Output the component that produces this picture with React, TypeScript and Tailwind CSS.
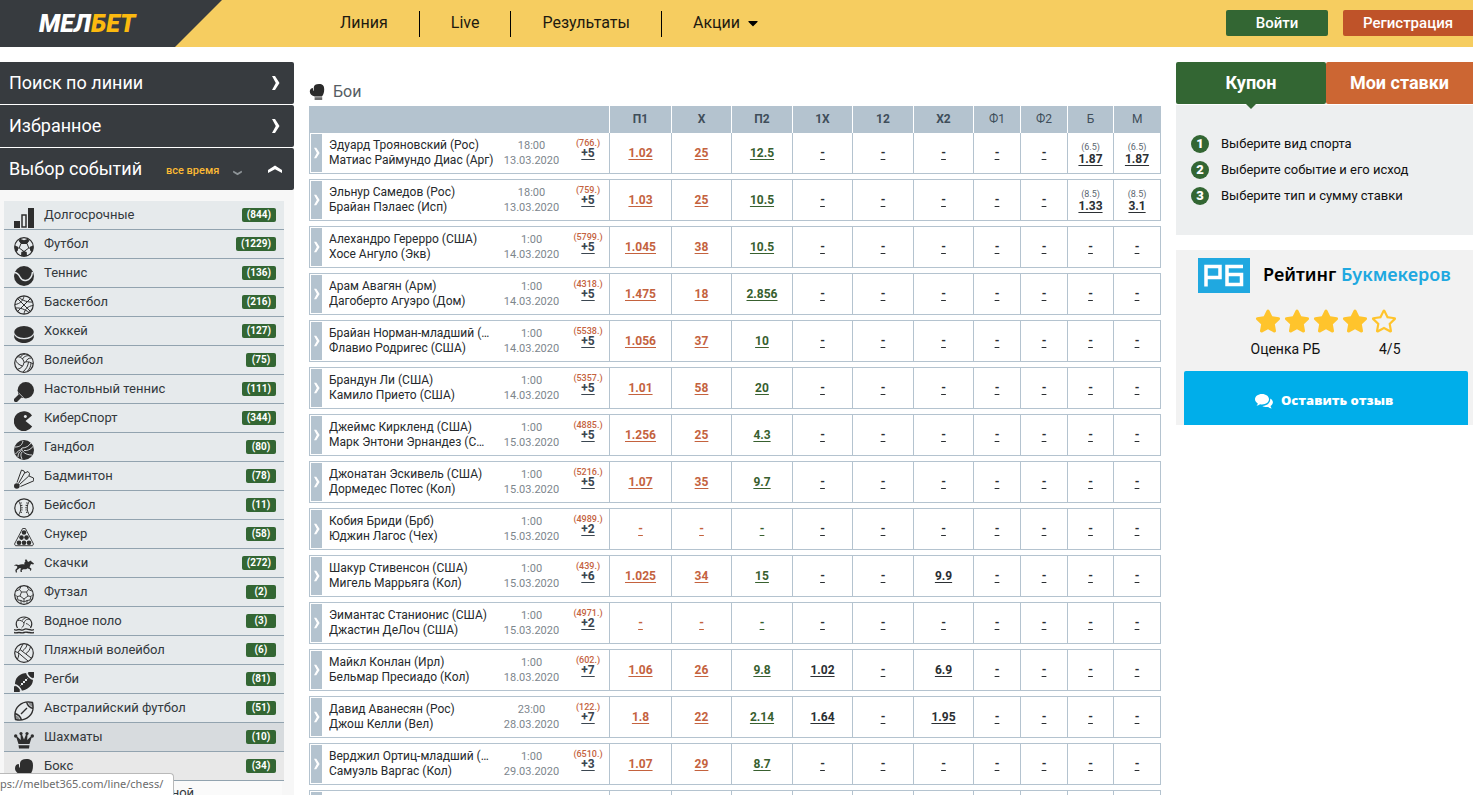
import { useState } from 'react';
import type { ReactNode } from 'react';
import { FaCaretDown, FaRegStar, FaStar } from 'react-icons/fa';

type Sport = {
  name: string;
  count: number;
  icon: ReactNode;
};

type Fight = {
  home: string;
  away: string;
  time: string;
  date: string;
  id: string;
  more: string;
  odds: string[];
  total?: string;
};

const icons = {
  chart: (
    <>
      <path d="M0 13h6v7H0zM14 0h6v20h-6z" fill="currentColor" stroke="none" />
      <path d="M8 7h4v12H8z" strokeWidth="1.500" />
    </>
  ),
  football: (
    <>
      <circle cx="10" cy="10" r="9.300" />
      <path d="M7 6.500h6l1.800 4.500-4.800 3.500-4.800-3.500zM7 6.500 5 3M13 6.500 15 3M5.200 11 1 11.500M14.800 11l4.200.5M10 14.500V18" strokeWidth="1" />
      <path d="M6 1.800 10 3.200l4-1.400 1 2.200-2.400 2.500H7.400L5 4zM7.300 15l2.700-1 2.700 1 .3 4.200H7zM.8 8.500 4 9.800v3.400L2.500 15 .7 12zM19.200 8.500 16 9.800v3.400l1.500 1.800 1.800-3z" fill="currentColor" stroke="none" />
    </>
  ),
  tennis: (
    <>
      <circle cx="10" cy="10" r="10" fill="currentColor" stroke="none" />
      <path d="M0 6.500c3.500 0 4.800 2 6 4.500 1.300 2.600 3 4 6 3.500 3.500-.6 6-3.800 6.500-8.500" stroke="#e6eaec" strokeWidth="1.500" />
    </>
  ),
  basketball: (
    <>
      <circle cx="10" cy="10" r="9.200" />
      <path d="M3.500 3.500l13 13M16.500 3.500l-13 13M10 1c-.5 4-4 8-9 8.500M19 10.500c-5 .5-8.500 4-9 8.500M5 2.500c3.500 3 9 5 13.500 4.500M1.500 13c4.500-.5 10 1.500 13.500 4.500" strokeWidth="1" />
    </>
  ),
  puck: (
    <>
      <ellipse cx="10" cy="8" rx="9.800" ry="6" fill="currentColor" stroke="none" />
      <path d="M.2 10.300C2 14 6 15 10 15s8-1 9.800-4.700v3.200C18 17.700 14 19 10 19S2 17.700.2 13.500z" fill="currentColor" stroke="none" />
      <path d="M.4 10.500C2.500 14 6 14.800 10 14.800s7.500-.8 9.600-4.300" stroke="#e6eaec" strokeWidth=".8" />
    </>
  ),
  volleyball: (
    <>
      <circle cx="10" cy="10" r="9.300" />
      <path d="M10 9.500C9.500 6 6.500 3 3 4M10 9.500c3-1.500 6.500-.5 9 1.500M10 9.500c-.5 3.500-3 6-6.500 6.800M8.300 6C10 3.500 13 2 16 3M14.500 9c-.5 4-2.500 7.500-5.500 9.800M17 10c0 3-1.500 6-3.500 8M8.500 13C5 12 2 9.500 1.500 6.500M12 9c.5-2.500 2.500-4 5-4M6 4.500C7.500 2.500 9 1.500 11 1" strokeWidth="1" />
    </>
  ),
  paddle: (
    <>
      <circle cx="11.800" cy="8.200" r="8.200" fill="currentColor" stroke="none" />
      <path d="M4 9.500 10.500 16 7.500 15.500 3.500 19.600a2 2 0 0 1-3-3L4.600 12.600z" fill="currentColor" stroke="none" />
      <path d="M4.500 10.800 9.800 16" stroke="#e6eaec" strokeWidth=".8" />
    </>
  ),
  pacman: (
    <path fillRule="evenodd" d="M18 4.500 11.500 10l6.700 5.600A10 10 0 1 1 18 4.500zM11.300 4a1.500 1.500 0 1 0 .1 0z" fill="currentColor" stroke="none" />
  ),
  handball: (
    <>
      <circle cx="10" cy="10" r="10" fill="currentColor" stroke="none" />
      <path d="M1 7c5 0 7-2 8-6M8 8c4 0 7-2 9-5M7.500 8C8 12 12 15 18 15M10 10.500c3.500.5 6.500-1 9-4M1.500 14c2-2.500 4-4 6-4.500M4 17c0-3 1-5 3.500-6.500M8 19c-1.500-3-1.500-5 0-7" stroke="#e6eaec" strokeWidth=".9" />
    </>
  ),
  shuttle: (
    <>
      <circle cx="2.800" cy="17" r="2.800" fill="currentColor" stroke="none" />
      <path d="M3 13.500 7.500 1l2.500 1 .8 2L14 2.500l1.500 2L15 7l4.500 2 .3 2.800L6.500 17.500M4.500 14.500 10.500 4M5.500 15.500 14.800 7" strokeWidth="1" />
    </>
  ),
  baseball: (
    <>
      <circle cx="10" cy="10" r="9.200" />
      <path d="M4.500 3c3 4 3 10 0 14M15.500 3c-3 4-3 10 0 14" strokeWidth="1" />
      <path d="M6.800 4.500c1.600 4 1.600 7 0 11M13.200 4.500c-1.600 4-1.600 7 0 11" strokeWidth="1.400" strokeDasharray="1 1.400" />
    </>
  ),
  snooker: (
    <>
      <path d="M8.600 1.500h2.800L19.500 17l-1 1.700h-17L.5 17z" strokeWidth=".9" />
      <g fill="currentColor" stroke="none">
        <circle cx="10" cy="5.500" r="2.300" />
        <circle cx="7.500" cy="10.600" r="2.300" />
        <circle cx="12.500" cy="10.600" r="2.300" />
        <circle cx="5" cy="15.700" r="2.300" />
        <circle cx="10" cy="15.700" r="2.300" />
        <circle cx="15" cy="15.700" r="2.300" />
      </g>
    </>
  ),
  horse: (
    <path d="M0 9.500c2-1.500 3-1.300 4.500-.5 2-1 4-.8 6-.6-.5-1 0-2.400 1-3.200L10.800 4l1.400-.8 1 1.200.8 1.500 3-1.400.4 1 2.600 2-.8 1-2.200-.4-1.500 3.200 2 1.500-.6 2-1-.3.300-1-2.700-1.300-1.300 1-3 .1-1.500 1 .3 1.700-1.400-.1-.3-2.200 1-1-1.500-.6-3 2.200.2 2.200-1.200.1-.5-2.700 1.800-2 .2-1.500C2.200 9.400 1.500 10 0 9.500z" fill="currentColor" stroke="none" />
  ),
  futsal: (
    <>
      <circle cx="10" cy="10" r="9.300" />
      <path d="M7.500 7h5l1.500 4-4 3-4-3zM7.500 7 5.500 4.500 7 1.500M12.500 7l2-2.500-1.500-3M14 11l3 .5 2-2M6 11l-3 .5-2-2M10 14v3M5.500 4.500 2.500 6M14.500 4.500l3 1.500M3 11.500 4 15l3 .5 3 1.500 3-1.500 3-.5 1-3.500M7 15.500V19M13 15.500V19" strokeWidth=".9" />
    </>
  ),
  waterpolo: (
    <>
      <path d="M3.500 14C0 8 4.500 3 10 3s10 5 6.500 11" />
      <path d="M10 9C8 6.500 6 6 4 6.500M10 9c1-3 3-4.500 6-3.500M10 9c0 2-1 4-2.500 5M12 9.500c2 .5 3.500 2 4.500 3M8 6.500C9.500 5 10.500 4 12 3.500" strokeWidth=".9" />
      <path d="M0 15.500c2 1.500 3 0 5 0s3 1.500 5 0 3 0 5 0 3 1.500 5 0M0 18.500c2 1 3 0 5 0s3 1 5 0 3 0 5 0 3 1 5 0" strokeWidth="1.400" />
    </>
  ),
  beach: (
    <>
      <circle cx="10" cy="10" r="9.300" />
      <path d="M6 6.500 17 15M4 9.500 14 18M6 6.500 9 1M4 9.500 1 8.500M6 6.500 4 9.500M8.500 8C11 6 13 3.500 13 1.500M12 10.500c2.500-1.500 4-4 4.500-7M3.500 16C4.500 14 5 12 4.500 10" strokeWidth="1" />
    </>
  ),
  rugby: (
    <>
      <path d="M2 18C0 12 1 7 4.500 4S13 0 18 2c2 5 1 10-2.500 13S7 20 2 18z" fill="currentColor" stroke="none" />
      <path d="M0 12.500c4 1 6.500 3.500 7.500 7.500M12.500 0c1 4 3.500 6.500 7.500 7.500" stroke="#e6eaec" strokeWidth="1.500" />
      <path d="m6.500 13.500 7-7M7 11l2 2M9 9l2 2M11 7l2 2" stroke="#e6eaec" strokeWidth="1" />
      <path d="M0 14v6h6c-1-3-3-5-6-6zM14 0h6v6c-3-1-5-3-6-6z" fill="currentColor" stroke="none" />
    </>
  ),
  aussie: (
    <>
      <path d="M1.500 18.500C0 12 1.500 7.500 5 4.500S13 0 18.500 1.500C20 8 18.500 12.500 15 15.500S7 20 1.500 18.500zM1 12.500c3.500 1 5.500 3 6.500 6.500M12.500 1c1 3.500 3 5.500 6.500 6.500M7 13l6-6" strokeWidth="1.400" />
      <path d="M1 14v5h5c-1-3-2.500-4-5-5zM14 1h5v5c-3-1-4-2.500-5-5z" fill="currentColor" stroke="none" opacity=".5" />
    </>
  ),
  crown: (
    <g fill="currentColor" stroke="none">
      <path d="M4.500 14 2.200 7l1-.5L6.800 10 6.500 4h1.300L10 9.500 12.200 4h1.300l-.3 6 3.600-3.500 1 .5-2.300 7zM4.500 15.200h11L15 18.500H5z" />
      <circle cx="1.700" cy="6" r="1.700" />
      <circle cx="7" cy="3.500" r="1.600" />
      <circle cx="13" cy="3.500" r="1.600" />
      <circle cx="18.300" cy="6" r="1.700" />
    </g>
  ),
  glove: (
    <g fill="currentColor" stroke="none">
      <path d="M6 4C6.500 1.200 8.500 0 12.500 0 17 0 19 1.800 19 6.500c0 4-.8 6.500-2.800 9H7.200C3.500 14.500 1 12.500 1 9.300 1 6.500 2.800 5 4.800 5l.5 3.500H6z" />
      <path d="M7 16.500h9.500V20H7z" opacity=".7" />
    </g>
  ),
};

const sports: Sport[] = [
  { name: 'Долгосрочные', count: 844, icon: icons.chart },
  { name: 'Футбол', count: 1229, icon: icons.football },
  { name: 'Теннис', count: 136, icon: icons.tennis },
  { name: 'Баскетбол', count: 216, icon: icons.basketball },
  { name: 'Хоккей', count: 127, icon: icons.puck },
  { name: 'Волейбол', count: 75, icon: icons.volleyball },
  { name: 'Настольный теннис', count: 111, icon: icons.paddle },
  { name: 'КиберСпорт', count: 344, icon: icons.pacman },
  { name: 'Гандбол', count: 80, icon: icons.handball },
  { name: 'Бадминтон', count: 78, icon: icons.shuttle },
  { name: 'Бейсбол', count: 11, icon: icons.baseball },
  { name: 'Снукер', count: 58, icon: icons.snooker },
  { name: 'Скачки', count: 272, icon: icons.horse },
  { name: 'Футзал', count: 2, icon: icons.futsal },
  { name: 'Водное поло', count: 3, icon: icons.waterpolo },
  { name: 'Пляжный волейбол', count: 6, icon: icons.beach },
  { name: 'Регби', count: 81, icon: icons.rugby },
  { name: 'Австралийский футбол', count: 51, icon: icons.aussie },
  { name: 'Шахматы', count: 10, icon: icons.crown },
  { name: 'Бокс', count: 34, icon: icons.glove },
];

const fights: Fight[] = [
  { home: 'Эдуард Трояновский (Рос)', away: 'Матиас Раймундо Диас (Арг)', time: '18:00', date: '13.03.2020', id: '766', more: '+5', odds: ['1.02', '25', '12.5', '-', '-', '-', '-', '-', '1.87', '1.87'], total: '6.5' },
  { home: 'Эльнур Самедов (Рос)', away: 'Брайан Пэлаес (Исп)', time: '18:00', date: '13.03.2020', id: '759', more: '+5', odds: ['1.03', '25', '10.5', '-', '-', '-', '-', '-', '1.33', '3.1'], total: '8.5' },
  { home: 'Алехандро Герерро (США)', away: 'Хосе Ангуло (Экв)', time: '1:00', date: '14.03.2020', id: '5799', more: '+5', odds: ['1.045', '38', '10.5', '-', '-', '-', '-', '-', '-', '-'] },
  { home: 'Арам Авагян (Арм)', away: 'Дагоберто Агуэро (Дом)', time: '1:00', date: '14.03.2020', id: '4318', more: '+5', odds: ['1.475', '18', '2.856', '-', '-', '-', '-', '-', '-', '-'] },
  { home: 'Брайан Норман-младший (США)', away: 'Флавио Родригес (США)', time: '1:00', date: '14.03.2020', id: '5538', more: '+5', odds: ['1.056', '37', '10', '-', '-', '-', '-', '-', '-', '-'] },
  { home: 'Брандун Ли (США)', away: 'Камило Прието (США)', time: '1:00', date: '14.03.2020', id: '5357', more: '+5', odds: ['1.01', '58', '20', '-', '-', '-', '-', '-', '-', '-'] },
  { home: 'Джеймс Киркленд (США)', away: 'Марк Энтони Эрнандез (США)', time: '1:00', date: '15.03.2020', id: '4885', more: '+5', odds: ['1.256', '25', '4.3', '-', '-', '-', '-', '-', '-', '-'] },
  { home: 'Джонатан Эскивель (США)', away: 'Дормедес Потес (Кол)', time: '1:00', date: '15.03.2020', id: '5216', more: '+5', odds: ['1.07', '35', '9.7', '-', '-', '-', '-', '-', '-', '-'] },
  { home: 'Кобия Бриди (Брб)', away: 'Юджин Лагос (Чех)', time: '1:00', date: '15.03.2020', id: '4989', more: '+2', odds: ['-', '-', '-', '-', '-', '-', '-', '-', '-', '-'] },
  { home: 'Шакур Стивенсон (США)', away: 'Мигель Маррьяга (Кол)', time: '1:00', date: '15.03.2020', id: '439', more: '+6', odds: ['1.025', '34', '15', '-', '-', '9.9', '-', '-', '-', '-'] },
  { home: 'Эимантас Станионис (США)', away: 'Джастин ДеЛоч (США)', time: '1:00', date: '15.03.2020', id: '4971', more: '+2', odds: ['-', '-', '-', '-', '-', '-', '-', '-', '-', '-'] },
  { home: 'Майкл Конлан (Ирл)', away: 'Бельмар Пресиадо (Кол)', time: '1:00', date: '18.03.2020', id: '602', more: '+7', odds: ['1.06', '26', '9.8', '1.02', '-', '6.9', '-', '-', '-', '-'] },
  { home: 'Давид Аванесян (Рос)', away: 'Джош Келли (Вел)', time: '23:00', date: '28.03.2020', id: '122', more: '+7', odds: ['1.8', '22', '2.14', '1.64', '-', '1.95', '-', '-', '-', '-'] },
  { home: 'Верджил Ортиц-младший (США)', away: 'Самуэль Варгас (Кол)', time: '1:00', date: '29.03.2020', id: '6510', more: '+3', odds: ['1.07', '29', '8.7', '-', '-', '-', '-', '-', '-', '-'] },
];

const columns = ['П1', 'X', 'П2', '1X', '12', 'X2', 'Ф1', 'Ф2', 'Б', 'М'];

const columnWidths = [
  'w-[62px]',
  'w-[60px]',
  'w-[61px]',
  'w-[60px]',
  'w-[61px]',
  'w-[60px]',
  'w-[47px]',
  'w-[47px]',
  'w-[46px]',
  'w-[47px]',
];

const steps = ['Выберите вид спорта', 'Выберите событие и его исход', 'Выберите тип и сумму ставки'];

function SportIcon({ children, className }: { children: ReactNode; className: string }) {
  return (
    <svg viewBox="0 0 20 20" fill="none" stroke="currentColor" strokeWidth="1.2" className={className} aria-hidden="true">
      {children}
    </svg>
  );
}

function Chevron({ className }: { className: string }) {
  return (
    <svg viewBox="0 0 8 14" fill="currentColor" className={className} aria-hidden="true">
      <path d="M0 0h3l4.500 7L3 14H0l3.800-7z" />
    </svg>
  );
}

function Header() {
  return (
    <header className="flex h-[47px] shrink-0 bg-[#f6cd60]">
      <a
        href="#home"
        className="flex w-[222px] shrink-0 items-center bg-[#373b3f] pl-[39px] text-[25px] leading-none font-black text-white italic [clip-path:polygon(0_0,100%_0,calc(100%-47px)_100%,0_100%)]"
      >
        МЕЛ<span className="text-[#fbb90f]">БЕТ</span>
      </a>
      <nav className="ml-[87px] flex grow pt-[11px] text-base leading-6 text-[#1d1a10]">
        <a href="#line" className="h-[26px] border-r border-black px-[31px]">Линия</a>
        <a href="#live" className="h-[26px] border-r border-black px-[31px]">Live</a>
        <a href="#results" className="h-[26px] border-r border-black px-[31px]">Результаты</a>
        <button type="button" className="flex h-6 items-center gap-[5px] px-[31px]">
          Акции
          <FaCaretDown className="size-4 text-black" />
        </button>
      </nav>
      <div className="flex shrink-0 gap-[15px] pt-[10px] text-[15px] font-medium text-white">
        <button type="button" className="h-[26px] w-[102px] rounded-xs bg-[#336633]">Войти</button>
        <button type="button" className="h-[26px] w-[130px] rounded-l-xs bg-[#bf5329]">Регистрация</button>
      </div>
    </header>
  );
}

function Sidebar() {
  const [active, setActive] = useState('Шахматы');

  return (
    <aside className="w-[294px] shrink-0 bg-[#f7f7f7]">
      <div className="space-y-px bg-white text-lg text-white">
        <button type="button" className="flex h-[42px] w-full items-center justify-between rounded-r-xs bg-[#373b3f] pr-[14px] pl-[9px]">
          Поиск по линии
          <Chevron className="h-[14px] w-2" />
        </button>
        <button type="button" className="flex h-[42px] w-full items-center justify-between rounded-r-xs bg-[#373b3f] pr-[14px] pl-[9px]">
          Избранное
          <Chevron className="h-[14px] w-2" />
        </button>
        <div className="flex h-[42px] items-center rounded-r-xs bg-[#373b3f] pr-3 pl-[9px]">
          <h2 className="w-[157px]">Выбор событий</h2>
          <button type="button" className="mt-1 flex items-center gap-4 text-[11px] font-medium text-[#fbb934]">
            все время
            <Chevron className="mt-1 h-[10px] w-[5px] rotate-90 text-[#8e9498]" />
          </button>
          <button type="button" aria-label="Свернуть" className="ml-auto flex h-4 w-[14px] items-center justify-center">
            <Chevron className="h-[14px] w-2 shrink-0 -rotate-90" />
          </button>
        </div>
      </div>
      <ul className="mt-[11px] mr-[10px] ml-1 text-[13px] text-[#33383c]">
        {sports.map((sport) => (
          <li key={sport.name} className={active === sport.name ? 'bg-[#d7dbde]' : sport.name === 'Бокс' ? 'bg-[#e8e8e8]' : 'bg-[#e6eaec]'}>
            <button
              type="button"
              onClick={() => setActive(sport.name)}
              className="flex h-[29px] w-full border-b border-[#92a3af] pr-2 pl-[10px] text-left leading-7"
            >
              <SportIcon className="mt-[7px] size-5 text-[#2e2e2e]">{sport.icon}</SportIcon>
              <span className="ml-[10px] grow">{sport.name}</span>
              <span className="mt-[7px] h-[14px] min-w-[30px] rounded-xs bg-[#336633] px-[5px] text-center text-[10px] leading-[14px] font-bold text-white">
                ({sport.count})
              </span>
            </button>
          </li>
        ))}
        <li className="mx-[2px] h-[29px] bg-[#fafafa] pl-[38px] leading-6 whitespace-nowrap">Мотоспорт – шоссейной</li>
      </ul>
    </aside>
  );
}

function OddCell({ value, index, total }: { value: string; index: number; total?: string }) {
  const color = index < 2 ? 'text-[#c4623e]' : index === 2 ? 'text-[#38602f]' : 'text-[#2b2f33]';

  return (
    <td className="border border-[#b4c3cf] p-0 text-center align-middle">
      {total && index > 7 && <div className="h-3 text-[9px] leading-3 text-[#5b6670]">({total})</div>}
      <a href="#bet" className={`block text-xs leading-3 font-bold underline underline-offset-2 ${color}`}>
        {value}
      </a>
    </td>
  );
}

function Fights() {
  return (
    <main className="min-w-0 grow px-[15px] pt-[22px]">
      <h1 className="flex h-[22px] items-start gap-2 text-base leading-4 text-[#555d64]">
        <SportIcon className="size-4 text-[#2b2b2b]">{icons.glove}</SportIcon>
        Бои
      </h1>
      <table className="w-full table-fixed border-collapse">
        <colgroup>
          <col />
          {columns.map((column, i) => (
            <col key={column} className={columnWidths[i]} />
          ))}
        </colgroup>
        <thead>
          <tr className="h-[26px] bg-[#b4c3cf] text-xs text-[#3f4e5a]">
            <th aria-label="Событие" className="border-l border-[#b4c3cf]" />
            {columns.map((column, i) => (
              <th key={column} scope="col" className={`border-l border-white p-0 ${i < 6 ? 'font-bold' : 'font-normal'}`}>
                {column}
              </th>
            ))}
          </tr>
        </thead>
        {fights.map((fight) => (
          <tbody key={fight.id}>
            <tr className="h-[41px]">
              <td className="border border-[#b4c3cf] p-px">
                <div className="flex h-[38px] items-center">
                  <button type="button" aria-label="Подробнее" className="flex h-full w-[11px] shrink-0 items-center justify-center bg-[#b4c3cf] text-white">
                    <Chevron className="h-3 w-[6px]" />
                  </button>
                  <div className="ml-[7px] min-w-0 grow text-xs leading-[15px] text-[#25292c]">
                    <div className="truncate">{fight.home}</div>
                    <div className="truncate">{fight.away}</div>
                  </div>
                  <div className="w-[73px] shrink-0 text-center text-[11px] leading-[15px] text-[#7d868d]">
                    <div>{fight.time}</div>
                    <div>{fight.date}</div>
                  </div>
                  <div className="w-10 shrink-0 self-start pt-1 text-center">
                    <div className="text-[9px] leading-[10px] font-medium text-[#c4623e]">({fight.id}.)</div>
                    <a href="#more" className="block text-xs leading-[10px] font-bold text-[#3b4650] underline underline-offset-2">{fight.more}</a>
                  </div>
                </div>
              </td>
              {fight.odds.map((value, i) => (
                <OddCell key={columns[i]} value={value} index={i} total={fight.total} />
              ))}
            </tr>
            <tr className="h-[6px]">
              <td colSpan={11} className="p-0" />
            </tr>
          </tbody>
        ))}
        <tbody>
          <tr className="h-[41px]">
            <td className="border border-[#b4c3cf] p-px">
              <div className="h-[38px] w-[11px] bg-[#b4c3cf]" />
            </td>
            {columns.map((column) => (
              <td key={column} className="border border-[#b4c3cf]" />
            ))}
          </tr>
        </tbody>
      </table>
    </main>
  );
}

function Coupon() {
  return (
    <section>
      <div className="flex h-[42px] text-lg font-bold text-white">
        <button type="button" className="relative w-[150px] rounded-xs bg-[#336633]">
          Купон
          <span className="absolute top-full left-1/2 -translate-x-1/2 border-x-[5px] border-t-[5px] border-x-transparent border-t-[#336633]" />
        </button>
        <button type="button" className="grow rounded-l-xs bg-[#cc6633]">Мои ставки</button>
      </div>
      <ol className="mt-px h-[130px] space-y-2 bg-[#edeff0] pt-[30px] pl-[15px] text-[13px] text-[#111]">
        {steps.map((step, i) => (
          <li key={step} className="flex h-[18px] items-center gap-3">
            <span className="size-[18px] rounded-full bg-[#336633] text-center leading-[18px] font-black text-white">{i + 1}</span>
            {step}
          </li>
        ))}
      </ol>
    </section>
  );
}

function Rating() {
  return (
    <section className="mt-[15px] flex flex-col bg-[#f2f2f2] pt-2">
      <div className="flex h-[35px] items-center pl-[22px]">
        <svg viewBox="0 0 52 35" className="h-[35px] w-[52px]" role="img" aria-label="РБ">
          <path d="M0 0h52v35H0z" fill="#20a8e0" />
          <path d="M8 28.500V8.500h14v11H8M45 8.500H29v18h14.500v-10H29" fill="none" stroke="#fff" strokeWidth="3.500" />
        </svg>
        <span className="ml-[13px] pb-1 font-['Noto_Sans',sans-serif] text-lg leading-6 font-semibold whitespace-nowrap text-black">
          Рейтинг <span className="text-[#20a8e0]">Букмекеров</span>
        </span>
      </div>
      <div className="mt-[15px] flex justify-center gap-[3px] pl-[2px] text-[#ffc42c]">
        <FaStar className="size-[26px]" />
        <FaStar className="size-[26px]" />
        <FaStar className="size-[26px]" />
        <FaStar className="size-[26px]" />
        <FaRegStar className="size-[26px]" />
      </div>
      <div className="mx-auto mt-[7px] mb-px flex w-[152px] justify-between pl-[2px] text-sm leading-4 text-[#111]">
        <span>Оценка РБ</span>
        <span>4/5</span>
      </div>
      <a
        href="#review"
        className="mt-[13px] mr-[5px] ml-2 flex h-[54px] items-center justify-center gap-2 rounded-t-xs bg-[#00aeea] pt-[6px] pr-1 font-['Open_Sans',sans-serif] text-[13px] font-extrabold text-white"
      >
        <svg viewBox="0 0 18 16" className="h-4 w-[18px]" fill="currentColor" aria-hidden="true">
          <path d="M7 1c4 0 7 2.300 7 5.300s-3 5.200-7 5.200c-.7 0-1.300 0-1.900-.2C4 12 2.800 12.600 1.500 12.700c.7-.7 1.200-1.400 1.300-2.300C1 9.400 0 8 0 6.300 0 3.300 3 1 7 1z" />
          <path d="M15.300 5.500c1.600.9 2.600 2.200 2.600 3.800 0 1.500-.9 2.800-2.400 3.700.2.900.6 1.700 1.200 2.400-1.400-.1-2.600-.7-3.500-1.500-2.200.4-4.400 0-5.900-1 4.700.1 8.200-2.800 8-7.400z" />
        </svg>
        Оставить отзыв
      </a>
    </section>
  );
}

export default function App() {
  return (
    <div className="flex h-screen flex-col overflow-hidden bg-white font-[Roboto,'Liberation_Sans',sans-serif]">
      <Header />
      <div className="flex min-h-0 grow items-start pt-[15px]">
        <Sidebar />
        <Fights />
        <aside className="w-[297px] shrink-0">
          <Coupon />
          <Rating />
        </aside>
      </div>
      <div className="fixed bottom-0 left-0 flex h-[22px] w-[174px] items-center rounded-tr-sm border-t border-r border-[#b9b9b9] bg-white font-['Noto_Sans',sans-serif] text-[11px] whitespace-nowrap text-[#6b6b6b]">
        ps://melbet365.com/line/chess/
      </div>
    </div>
  );
}
